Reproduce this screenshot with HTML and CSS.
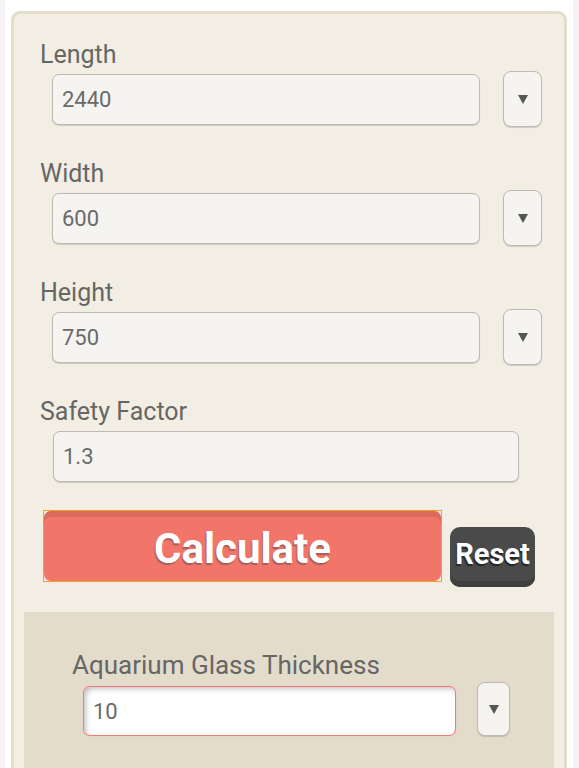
FILE: index.html
```html
<!doctype html>
<html lang="en">
<head>
    <meta charset="UTF-8">
    <meta name="viewport" content="width=device-width, initial-scale=1.0">
    <title>Aquarium Glass Thickness Calculator</title>
    <link rel="stylesheet" href="styles.css">
</head>
<body>
<div class="page">
    <form class="calc" onsubmit="return false">
        <div class="field">
            <label class="field-label" for="len">Length</label>
            <div class="field-row">
                <input class="field-input" id="len" type="text" value="2440">
                <button class="unit-btn" type="button">
                    <svg width="10" height="9" viewBox="0 0 10 9"><polygon points="0,0 10,0 5,9"/></svg>
                </button>
            </div>
        </div>
        <div class="field">
            <label class="field-label" for="wid">Width</label>
            <div class="field-row">
                <input class="field-input" id="wid" type="text" value="600">
                <button class="unit-btn" type="button">
                    <svg width="10" height="9" viewBox="0 0 10 9"><polygon points="0,0 10,0 5,9"/></svg>
                </button>
            </div>
        </div>
        <div class="field">
            <label class="field-label" for="hgt">Height</label>
            <div class="field-row">
                <input class="field-input" id="hgt" type="text" value="750">
                <button class="unit-btn" type="button">
                    <svg width="10" height="9" viewBox="0 0 10 9"><polygon points="0,0 10,0 5,9"/></svg>
                </button>
            </div>
        </div>
        <div class="field field-last">
            <label class="field-label" for="sf">Safety Factor</label>
            <div class="field-row">
                <input class="field-input safety" id="sf" type="text" value="1.3">
            </div>
        </div>
        <div class="actions">
            <button class="btn-calc" type="button"><span>Calculate</span></button>
            <button class="btn-reset" type="reset">Reset</button>
        </div>
        <div class="result">
            <label class="result-label" for="thk">Aquarium Glass Thickness</label>
            <div class="result-row">
                <input class="result-input" id="thk" type="text" value="10">
                <button class="unit-btn small" type="button">
                    <svg width="10" height="9" viewBox="0 0 10 9"><polygon points="0,0 10,0 5,9"/></svg>
                </button>
            </div>
        </div>
    </form>
</div>
</body>
</html>
```

FILE: styles.css
```css
* {
    margin: 0;
    padding: 0;
    box-sizing: border-box;
}

body {
    background-color: #f4f2f7;
    font-family: Roboto, "Liberation Sans", sans-serif;
    color: #666;
}

.page {
    margin: 0 6px 0 5px;
    padding: 11px 6px 0;
    background-color: #fff;
    min-height: 768px;
}

.calc {
    background-color: #f2eee3;
    border: 3px solid #e4ddcc;
    border-bottom: 0;
    border-radius: 9px 9px 0 0;
    padding: 26px 10px 0;
}

.field {
    margin-bottom: 32px;
}

.field-last {
    margin-bottom: 26px;
}

.field-label {
    display: block;
    padding-left: 16px;
    font-size: 25px;
    line-height: 30px;
    color: #666;
}

.field-row {
    display: flex;
    align-items: center;
    gap: 23px;
    height: 56px;
    margin-top: 1px;
    padding: 0 12px 0 28px;
}

.field-input {
    flex: 1;
    height: 51px;
    padding: 0 9px;
    font-family: Roboto, "Liberation Sans", sans-serif;
    font-size: 22px;
    color: #6a6a6a;
    background-color: #f5f4f1;
    border: 1px solid #bcbab6;
    border-radius: 7px;
    box-shadow: 0 1px 1px rgba(0, 0, 0, 0.15);
    outline: none;
}

.field-input.safety {
    flex: none;
    width: 466px;
    margin-left: 1px;
}

.unit-btn {
    display: flex;
    align-items: center;
    justify-content: center;
    width: 39px;
    height: 56px;
    background-color: #f5f4f1;
    border: 1px solid #bcbab6;
    border-radius: 8px;
    box-shadow: 0 1px 1px rgba(0, 0, 0, 0.15);
}

.unit-btn svg {
    fill: #555;
}

.unit-btn.small {
    width: 33px;
    height: 54px;
}

.actions {
    display: flex;
    align-items: flex-start;
    gap: 8px;
    padding-left: 19px;
}

.btn-calc {
    width: 399px;
    height: 72px;
    border: 1px solid #efa21f;
    background-color: #f2eee3;
    font-family: Roboto, "Liberation Sans", sans-serif;
}

.btn-calc span {
    display: block;
    height: 70px;
    padding-top: 6px;
    border-radius: 7px;
    background-color: #f2756a;
    box-shadow: inset 0 6px 0 #dc6a5f;
    font-size: 42px;
    font-weight: bold;
    line-height: 64px;
    color: #fff;
    text-shadow: -1px 2px 1px rgba(70, 70, 70, 0.45);
}

.btn-reset {
    width: 85px;
    height: 60px;
    margin-top: 17px;
    padding-bottom: 6px;
    border: 0;
    border-radius: 10px;
    background-color: #4a4a4a;
    box-shadow: inset 0 -6px 0 #3f3f3f;
    font-family: Roboto, "Liberation Sans", sans-serif;
    font-size: 29px;
    font-weight: bold;
    line-height: 54px;
    color: #fff;
    text-shadow: -1px 2px 1px rgba(0, 0, 0, 0.5);
    white-space: nowrap;
    display: flex;
    justify-content: center;
}

.result {
    margin-top: 25px;
    background-color: #e3dccb;
    padding: 38px 0 60px 48px;
}

.result-label {
    display: block;
    font-size: 26px;
    line-height: 30px;
    color: #666;
}

.result-row {
    display: flex;
    align-items: flex-end;
    gap: 21px;
    height: 54px;
    margin-top: 2px;
    padding-left: 11px;
}

.result-input {
    width: 373px;
    height: 50px;
    padding: 0 9px;
    font-family: Roboto, "Liberation Sans", sans-serif;
    font-size: 22px;
    color: #6a6a6a;
    background-color: #fff;
    border: 1px solid #ee7c77;
    border-radius: 7px;
    box-shadow: 0 0 1px #f09a95, inset 3px 3px 6px -2px rgba(0, 0, 0, 0.3);
    outline: none;
}
```
